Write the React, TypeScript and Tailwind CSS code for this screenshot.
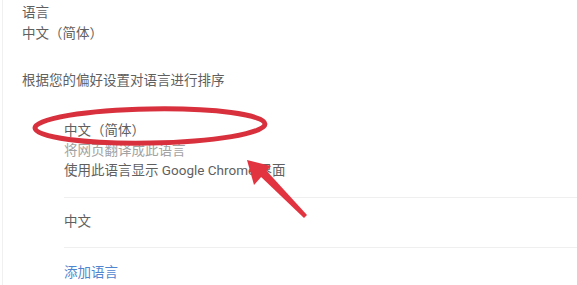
import React from "react";

export default function App() {
  return (
    <div className="relative w-[577px] h-[285px] overflow-hidden bg-white text-[13.5px] leading-[20px] text-[#5f5f5f] [font-family:Roboto,'Noto_Sans_CJK_SC',sans-serif]">
      <div className="absolute left-[2px] top-0 h-full w-px bg-[#f0f0f0]" />
      <div className="pl-[22px] pt-[2px]">
        <div>语言</div>
        <div className="mt-px">中文（简体）</div>
        <div className="mt-[27px]">根据您的偏好设置对语言进行排序</div>
      </div>
      <div className="pl-[64px] mt-[30px]">
        <div className="flex flex-col">
          <div>中文（简体）</div>
          <div className="text-[#a3a3a3]">将网页翻译成此语言</div>
          <div>使用此语言显示 Google Chrome 界面</div>
        </div>
        <div className="mt-[17px] h-px bg-[#efefef]" />
        <div className="mt-[13px]">中文</div>
        <div className="mt-[16px] h-px bg-[#efefef]" />
        <div className="mt-[14px] text-[#5086cf]">添加语言</div>
      </div>
      <svg className="absolute left-0 top-0 pointer-events-none" width="577" height="285" viewBox="0 0 577 285">
        <ellipse cx="150" cy="126" rx="115" ry="17" fill="none" stroke="#d8303c" strokeWidth="5" transform="rotate(-1 150 126)" />
        <polygon points="307,215 304,218 258,174 264,168" fill="#e23440" />
        <polygon points="247,160 271,166 254,185" fill="#e23440" />
      </svg>
    </div>
  );
}
